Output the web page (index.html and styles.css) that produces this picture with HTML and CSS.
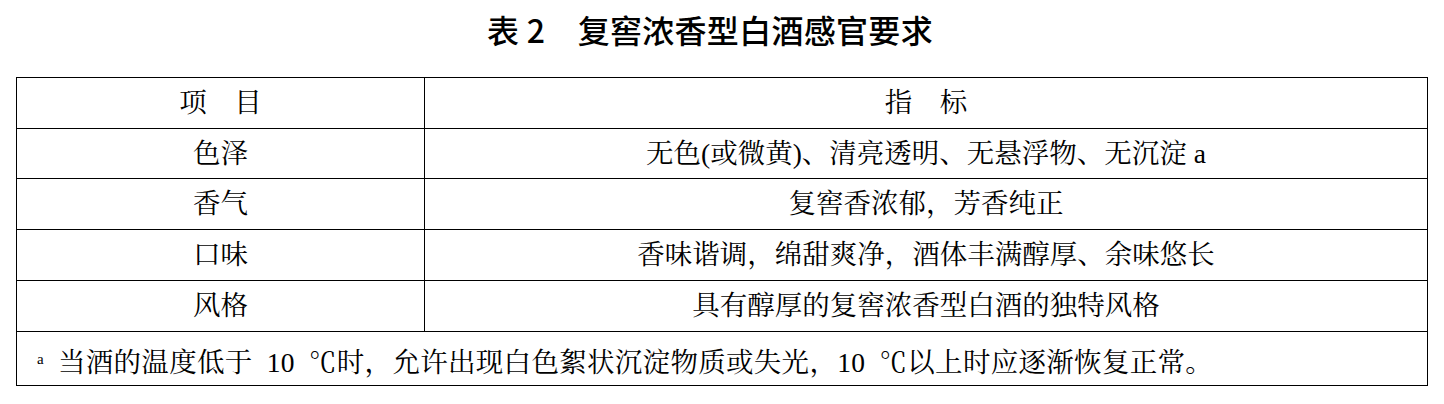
FILE: index.html
```html
<!DOCTYPE html>
<html lang="zh-CN">
<head>
<meta charset="utf-8">
<title>表 2 复窖浓香型白酒感官要求</title>
<link rel="stylesheet" href="styles.css">
</head>
<body>
<div class="page">
  <h1 class="title">表 2　复窖浓香型白酒感官要求</h1>
  <table class="spec">
    <colgroup>
      <col class="col-item">
      <col class="col-index">
    </colgroup>
    <tbody>
      <tr class="row r-head"><td>项　目</td><td>指　标</td></tr>
      <tr class="row r-a"><td>色泽</td><td>无色(或微黄)、清亮透明、无悬浮物、无沉淀 a</td></tr>
      <tr class="row r-b"><td>香气</td><td>复窖香浓郁，芳香纯正</td></tr>
      <tr class="row r-c"><td>口味</td><td>香味谐调，绵甜爽净，酒体丰满醇厚、余味悠长</td></tr>
      <tr class="row r-d"><td>风格</td><td>具有醇厚的复窖浓香型白酒的独特风格</td></tr>
      <tr class="row r-note"><td colspan="2" class="note"><sup class="mark">a</sup>当酒的温度低于 10 ℃时，允许出现白色絮状沉淀物质或失光，10 ℃以上时应逐渐恢复正常。</td></tr>
    </tbody>
  </table>
</div>
</body>
</html>
```

FILE: styles.css
```css
html, body {
  margin: 0;
  padding: 0;
  background: #ffffff;
}

.page {
  width: 1444px;
  height: 404px;
  overflow: hidden;
  color: #000;
}

.title {
  margin: 0 0 19px 0;
  height: 58px;
  line-height: 58px;
  text-align: center;
  font-family: "Noto Sans CJK SC", "Noto Sans", sans-serif;
  font-weight: 500;
  font-size: 32px;
  letter-spacing: 0.3px;
  padding-left: 250px;
  box-sizing: border-box;
  width: 1170px;
}

.spec {
  margin-left: 16px;
  width: 1412px;
  border-collapse: collapse;
  table-layout: fixed;
  font-family: "Liberation Serif", "Noto Serif CJK SC", "Noto Sans CJK SC", serif;
  font-size: 27.5px;
}

.col-item { width: 408px; }

.spec td {
  border: 1px solid #000;
  padding: 0;
  text-align: center;
  vertical-align: middle;
  line-height: 30px;
  white-space: nowrap;
}

.r-head { height: 51px; }
.r-a { height: 50px; }
.r-b { height: 51px; }
.r-c { height: 51px; }
.r-d { height: 51px; }
.r-note { height: 54px; }

.spec td.note {
  text-align: left;
  padding-left: 20px;
  padding-top: 4px;
  word-spacing: 7px;
  letter-spacing: 0.3px;
}

.mark {
  font-size: 15px;
  vertical-align: 8px;
  margin-right: 14px;
  word-spacing: 0;
}
```
